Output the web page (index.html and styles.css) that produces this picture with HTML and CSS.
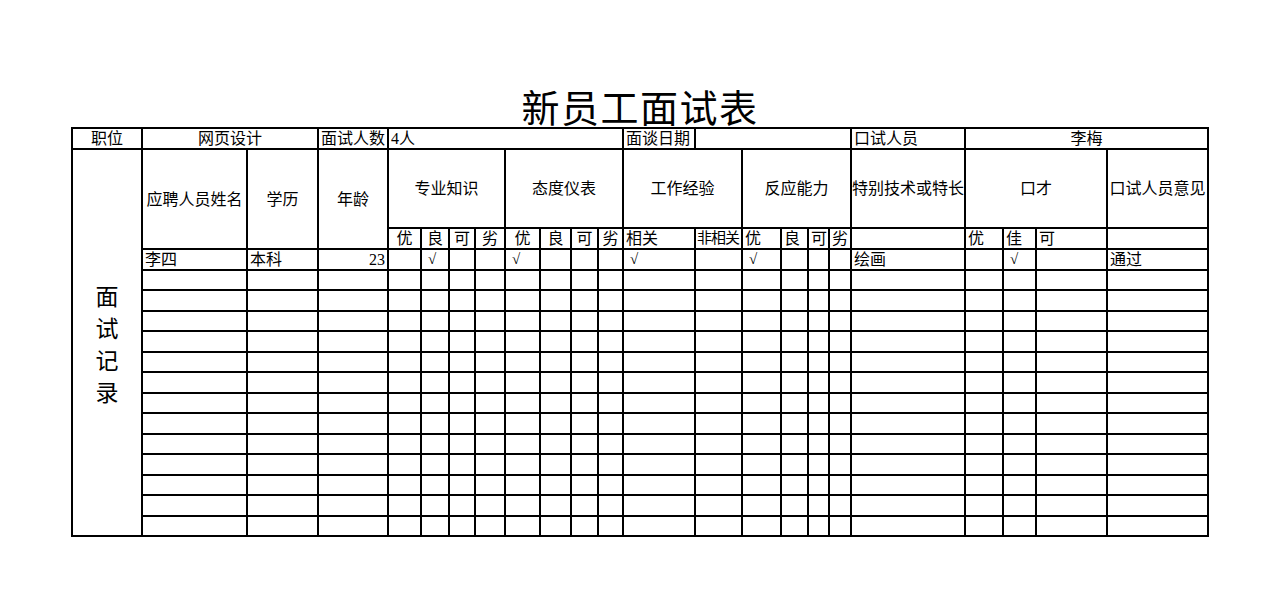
FILE: index.html
```html
<!DOCTYPE html>
<html lang="zh-CN">
<head>
<meta charset="utf-8">
<title>新员工面试表</title>
<link rel="stylesheet" href="styles.css">
</head>
<body>
<div class="page">
  <h1 class="title">新员工面试表</h1>
  <div class="sheet">
    <!-- row 1 -->
    <div class="c ctr">职位</div>
    <div class="c ctr s2">网页设计</div>
    <div class="c">面试人数</div>
    <div class="c s8">4人</div>
    <div class="c">面谈日期</div>
    <div class="c s5"></div>
    <div class="c">口试人员</div>
    <div class="c ctr s4">李梅</div>

    <!-- row 2 -->
    <div class="c side">面<br>试<br>记<br>录</div>
    <div class="c hd r2">应聘人员姓名</div>
    <div class="c hd r2">学历</div>
    <div class="c hd r2">年龄</div>
    <div class="c hd s4">专业知识</div>
    <div class="c hd s4">态度仪表</div>
    <div class="c hd s2">工作经验</div>
    <div class="c hd s4">反应能力</div>
    <div class="c hd">特别技术或特长</div>
    <div class="c hd s3">口才</div>
    <div class="c hd">口试人员意见</div>

    <!-- row 3 -->
    <div class="c ctr">优</div><div class="c ctr">良</div><div class="c ctr">可</div><div class="c ctr">劣</div>
    <div class="c ctr">优</div><div class="c ctr">良</div><div class="c ctr">可</div><div class="c ctr">劣</div>
    <div class="c">相关</div><div class="c tight">非相关</div>
    <div class="c">优</div><div class="c">良</div><div class="c">可</div><div class="c">劣</div>
    <div class="c"></div>
    <div class="c">优</div><div class="c">佳</div><div class="c">可</div>
    <div class="c"></div>

    <!-- data row 1 -->
    <div class="c">李四</div><div class="c">本科</div><div class="c num">23</div>
    <div class="c"></div><div class="c chk">√</div><div class="c"></div><div class="c"></div>
    <div class="c chk">√</div><div class="c"></div><div class="c"></div><div class="c"></div>
    <div class="c chk">√</div><div class="c"></div>
    <div class="c chk">√</div><div class="c"></div><div class="c"></div><div class="c"></div>
    <div class="c">绘画</div>
    <div class="c"></div><div class="c chk">√</div><div class="c"></div>
    <div class="c">通过</div>

    <!-- empty rows -->
    <div class="c"></div><div class="c"></div><div class="c"></div><div class="c"></div><div class="c"></div><div class="c"></div><div class="c"></div><div class="c"></div><div class="c"></div><div class="c"></div><div class="c"></div><div class="c"></div><div class="c"></div><div class="c"></div><div class="c"></div><div class="c"></div><div class="c"></div><div class="c"></div><div class="c"></div><div class="c"></div><div class="c"></div><div class="c"></div>
    <div class="c"></div><div class="c"></div><div class="c"></div><div class="c"></div><div class="c"></div><div class="c"></div><div class="c"></div><div class="c"></div><div class="c"></div><div class="c"></div><div class="c"></div><div class="c"></div><div class="c"></div><div class="c"></div><div class="c"></div><div class="c"></div><div class="c"></div><div class="c"></div><div class="c"></div><div class="c"></div><div class="c"></div><div class="c"></div>
    <div class="c"></div><div class="c"></div><div class="c"></div><div class="c"></div><div class="c"></div><div class="c"></div><div class="c"></div><div class="c"></div><div class="c"></div><div class="c"></div><div class="c"></div><div class="c"></div><div class="c"></div><div class="c"></div><div class="c"></div><div class="c"></div><div class="c"></div><div class="c"></div><div class="c"></div><div class="c"></div><div class="c"></div><div class="c"></div>
    <div class="c"></div><div class="c"></div><div class="c"></div><div class="c"></div><div class="c"></div><div class="c"></div><div class="c"></div><div class="c"></div><div class="c"></div><div class="c"></div><div class="c"></div><div class="c"></div><div class="c"></div><div class="c"></div><div class="c"></div><div class="c"></div><div class="c"></div><div class="c"></div><div class="c"></div><div class="c"></div><div class="c"></div><div class="c"></div>
    <div class="c"></div><div class="c"></div><div class="c"></div><div class="c"></div><div class="c"></div><div class="c"></div><div class="c"></div><div class="c"></div><div class="c"></div><div class="c"></div><div class="c"></div><div class="c"></div><div class="c"></div><div class="c"></div><div class="c"></div><div class="c"></div><div class="c"></div><div class="c"></div><div class="c"></div><div class="c"></div><div class="c"></div><div class="c"></div>
    <div class="c"></div><div class="c"></div><div class="c"></div><div class="c"></div><div class="c"></div><div class="c"></div><div class="c"></div><div class="c"></div><div class="c"></div><div class="c"></div><div class="c"></div><div class="c"></div><div class="c"></div><div class="c"></div><div class="c"></div><div class="c"></div><div class="c"></div><div class="c"></div><div class="c"></div><div class="c"></div><div class="c"></div><div class="c"></div>
    <div class="c"></div><div class="c"></div><div class="c"></div><div class="c"></div><div class="c"></div><div class="c"></div><div class="c"></div><div class="c"></div><div class="c"></div><div class="c"></div><div class="c"></div><div class="c"></div><div class="c"></div><div class="c"></div><div class="c"></div><div class="c"></div><div class="c"></div><div class="c"></div><div class="c"></div><div class="c"></div><div class="c"></div><div class="c"></div>
    <div class="c"></div><div class="c"></div><div class="c"></div><div class="c"></div><div class="c"></div><div class="c"></div><div class="c"></div><div class="c"></div><div class="c"></div><div class="c"></div><div class="c"></div><div class="c"></div><div class="c"></div><div class="c"></div><div class="c"></div><div class="c"></div><div class="c"></div><div class="c"></div><div class="c"></div><div class="c"></div><div class="c"></div><div class="c"></div>
    <div class="c"></div><div class="c"></div><div class="c"></div><div class="c"></div><div class="c"></div><div class="c"></div><div class="c"></div><div class="c"></div><div class="c"></div><div class="c"></div><div class="c"></div><div class="c"></div><div class="c"></div><div class="c"></div><div class="c"></div><div class="c"></div><div class="c"></div><div class="c"></div><div class="c"></div><div class="c"></div><div class="c"></div><div class="c"></div>
    <div class="c"></div><div class="c"></div><div class="c"></div><div class="c"></div><div class="c"></div><div class="c"></div><div class="c"></div><div class="c"></div><div class="c"></div><div class="c"></div><div class="c"></div><div class="c"></div><div class="c"></div><div class="c"></div><div class="c"></div><div class="c"></div><div class="c"></div><div class="c"></div><div class="c"></div><div class="c"></div><div class="c"></div><div class="c"></div>
    <div class="c"></div><div class="c"></div><div class="c"></div><div class="c"></div><div class="c"></div><div class="c"></div><div class="c"></div><div class="c"></div><div class="c"></div><div class="c"></div><div class="c"></div><div class="c"></div><div class="c"></div><div class="c"></div><div class="c"></div><div class="c"></div><div class="c"></div><div class="c"></div><div class="c"></div><div class="c"></div><div class="c"></div><div class="c"></div>
    <div class="c"></div><div class="c"></div><div class="c"></div><div class="c"></div><div class="c"></div><div class="c"></div><div class="c"></div><div class="c"></div><div class="c"></div><div class="c"></div><div class="c"></div><div class="c"></div><div class="c"></div><div class="c"></div><div class="c"></div><div class="c"></div><div class="c"></div><div class="c"></div><div class="c"></div><div class="c"></div><div class="c"></div><div class="c"></div>
    <div class="c"></div><div class="c"></div><div class="c"></div><div class="c"></div><div class="c"></div><div class="c"></div><div class="c"></div><div class="c"></div><div class="c"></div><div class="c"></div><div class="c"></div><div class="c"></div><div class="c"></div><div class="c"></div><div class="c"></div><div class="c"></div><div class="c"></div><div class="c"></div><div class="c"></div><div class="c"></div><div class="c"></div><div class="c"></div>
  </div>
</div>
</body>
</html>
```

FILE: styles.css
```css
* { box-sizing: border-box; }

html, body {
  margin: 0;
  padding: 0;
  background: #ffffff;
}

body {
  font-family: "Liberation Serif", "Noto Sans CJK SC", serif;
  color: #000000;
}

.page {
  padding: 84px 0 0 71px;
}

.title {
  margin: 0;
  width: 1138px;
  height: 43px;
  font-family: "Noto Sans CJK SC", sans-serif;
  font-weight: 400;
  font-size: 38px;
  line-height: 43px;
  text-align: center;
  letter-spacing: 1.5px;
}

.sheet {
  display: grid;
  width: 1138px;
  grid-template-columns:
    68px 103px 69px 68px
    31px 26px 24px 28px
    33px 29px 25px 23px
    70px 45px
    37px 25px 19px 20px
    112px
    36px 31px 69px
    99px;
  grid-template-rows: 19px 77px 19px repeat(14, 18.5px);
  gap: 2px;
  padding: 2px;
  background: #000000;
}

.c {
  background: #ffffff;
  font-size: 16px;
  line-height: 19px;
  padding: 0 1px 0 2px;
  white-space: nowrap;
  overflow: hidden;
}

.ctr { text-align: center; padding: 0; }
.num { text-align: right; padding-right: 2px; }
.chk { padding-left: 6px; font-size: 15px; }
.tight { font-size: 15px; letter-spacing: -1px; padding: 0 0 0 1px; }

.s2 { grid-column: span 2; }
.s3 { grid-column: span 3; }
.s4 { grid-column: span 4; }
.s5 { grid-column: span 5; }
.s8 { grid-column: span 8; }
.r2 { grid-row: span 2; }

.hd {
  display: flex;
  align-items: center;
  justify-content: center;
  padding: 0;
}

.side {
  grid-row: span 16;
  display: flex;
  align-items: center;
  justify-content: center;
  font-family: "Noto Sans CJK SC", sans-serif;
  font-size: 23px;
  line-height: 32px;
  text-align: center;
  padding: 0;
}
```
